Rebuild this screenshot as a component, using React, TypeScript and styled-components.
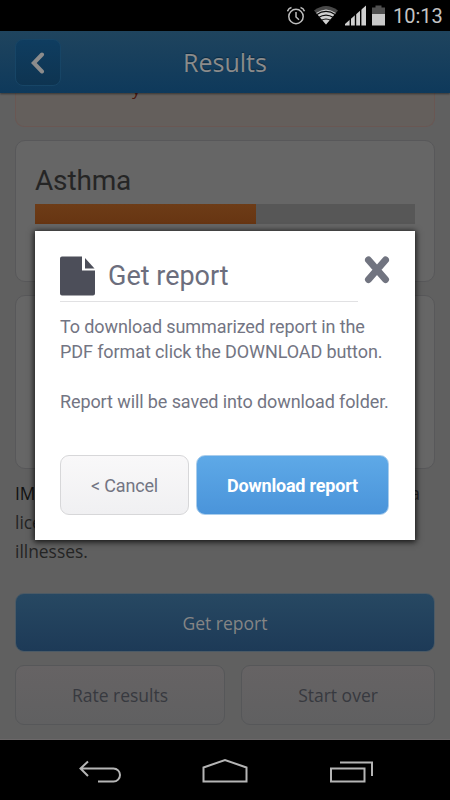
import React from "react";
import styled, { createGlobalStyle } from "styled-components";

const GlobalStyle = createGlobalStyle`
  *, *::before, *::after { box-sizing: border-box; }
  body { margin: 0; background: #000; }
  button { font: inherit; padding: 0; border: 0; background: none; }
`;

const Screen = styled.div`
  position: relative;
  width: 450px;
  height: 800px;
  display: flex;
  flex-direction: column;
  overflow: hidden;
  background: #000;
  font-family: "Open Sans", sans-serif;
`;

const StatusBar = styled.div`
  height: 31px;
  flex: none;
  display: flex;
  justify-content: flex-end;
  align-items: flex-start;
  padding-right: 7px;
`;

const StatusIcons = styled.svg`
  display: block;
  width: 106px;
  height: 31px;
`;

const Clock = styled.span`
  width: 50px;
  font: 400 20px/32px Roboto, sans-serif;
  color: #c4c4c4;
  white-space: nowrap;
`;

const Header = styled.header`
  height: 62px;
  flex: none;
  display: grid;
  grid-template-columns: 46px 1fr 46px;
  align-items: center;
  padding: 0 15px;
  background: linear-gradient(#1f445e, #0e395b);
  box-shadow: 0 1px 2px rgba(0, 0, 0, 0.45);
  z-index: 1;
`;

const BackButton = styled.button`
  width: 46px;
  height: 47px;
  display: grid;
  place-items: center;
  border-radius: 8px;
  border: 1px solid #174566;
  background: linear-gradient(#0f3d60, #0e3451);
`;

const HeaderTitle = styled.h1`
  margin: 0;
  text-align: center;
  font-size: 25px;
  line-height: 32px;
  font-weight: 400;
  color: #8b8b8b;
  text-shadow: 0 -1px 1px #0b2a41;
`;

const Content = styled.main`
  height: 647px;
  flex: none;
  display: flex;
  flex-direction: column;
  padding: 0 15px;
  background: #606060;
  border-bottom: 1px solid #6c6869;
`;

const Warning = styled.section`
  height: 34px;
  flex: none;
  overflow: hidden;
  display: flex;
  align-items: flex-end;
  padding: 0 0 25px 116px;
  border: 1px solid #6a5753;
  border-top: 0;
  border-radius: 0 0 9px 9px;
  background: #645f5c;
  color: #4a1710;
  font-size: 17px;
  line-height: 24px;
`;

const Card = styled.section<{ $height: number; $gap: number }>`
  height: ${(p) => p.$height}px;
  margin-top: ${(p) => p.$gap}px;
  flex: none;
  padding: 23px 19px;
  border: 1px solid #58585a;
  border-radius: 10px;
  background: #666;
`;

const CardTitle = styled.h2`
  margin: 0;
  font: 400 28px/33px Roboto, sans-serif;
  letter-spacing: -0.15px;
  color: #252525;
`;

const Meter = styled.div`
  height: 20px;
  margin-top: 7px;
  background: #575757;
`;

const MeterFill = styled.div`
  width: 58.2%;
  height: 100%;
  background: linear-gradient(#6d3c17, #673512);
`;

const Notice = styled.div`
  margin-top: 10px;
  height: 87px;
  flex: none;
  font-size: 17.4px;
  line-height: 29px;
  color: #242424;
`;

const NoticeLine = styled.div`
  display: flex;
  justify-content: space-between;
  padding-right: 15px;
`;

const Strong = styled.b`
  font-weight: 500;
  color: #111;
`;

const PrimaryAction = styled.button`
  height: 59px;
  margin-top: 27px;
  flex: none;
  border: 1px solid #4c5a65;
  border-radius: 9px;
  background: linear-gradient(#274862, #1d3a57);
  color: #858585;
  font-size: 17.5px;
`;

const ActionRow = styled.div`
  margin-top: 13px;
  display: grid;
  grid-template-columns: 210px 194px;
  gap: 16px;
`;

const SecondaryAction = styled.button`
  height: 60px;
  border: 1px solid #565759;
  border-radius: 9px;
  background: linear-gradient(#666364, #606061);
  color: #37393f;
  font-size: 17.5px;
`;

const NavBar = styled.nav`
  height: 60px;
  flex: none;
`;

const Dialog = styled.div`
  position: absolute;
  left: 35px;
  top: 231px;
  width: 380px;
  height: 309px;
  padding: 24px 26px 25px 25px;
  display: flex;
  flex-direction: column;
  background: #fff;
  box-shadow: 0 1px 6px 1px rgba(0, 0, 0, 0.8);
  font-family: Roboto, sans-serif;
  z-index: 2;
`;

const DialogHeader = styled.div`
  display: flex;
  justify-content: space-between;
  align-items: flex-start;
  height: 47px;
`;

const DialogHeading = styled.div`
  width: 298px;
  height: 47px;
  display: flex;
  align-items: flex-start;
  border-bottom: 1px solid #e1e1e3;
`;

const DialogTitle = styled.h2`
  margin: 3px 0 0 13px;
  font-size: 27px;
  line-height: 36px;
  font-weight: 400;
  color: #6c6e7d;
  white-space: nowrap;
`;

const CloseButton = styled.button`
  display: block;
  line-height: 0;
  margin-right: -1px;
`;

const Message = styled.p`
  margin: 12px 0 0;
  font-size: 18px;
  line-height: 25px;
  letter-spacing: -0.1px;
  color: #737583;
  white-space: pre;
`;

const DialogActions = styled.div`
  margin-top: auto;
  display: grid;
  grid-template-columns: 129px 193px;
  gap: 7px;
`;

const DialogButton = styled.button<{ $primary?: boolean }>`
  height: 60px;
  border-radius: 9px;
  border: 1px solid ${(p) => (p.$primary ? "#a9cdec" : "#d7d7d9")};
  background: ${(p) =>
    p.$primary
      ? "linear-gradient(#5ea9e7, #4a94da)"
      : "linear-gradient(#f9f8f9, #f0f0f2)"};
  color: ${(p) => (p.$primary ? "#fff" : "#737583")};
  font-size: 18px;
  letter-spacing: -0.2px;
  font-weight: ${(p) => (p.$primary ? 700 : 400)};
`;

const Label = styled.span<{ $width: number }>`
  display: inline-block;
  width: ${(p) => p.$width}px;
  white-space: nowrap;
`;

export default function App() {
  return (
    <Screen>
      <GlobalStyle />
      <StatusBar>
        <StatusIcons viewBox="287 0 106 31">
          <g fill="none" stroke="#bdbdbd" strokeWidth="1.5">
            <circle cx="296" cy="16.5" r="7.2" />
            <path d="M296 12v5l3 2.8M287.5 11.3q1-3 4-3.7M304.5 11.3q-1-3-4-3.7" />
          </g>
          <path d="M326 24.5 314 10.5q12-9 24 0z" fill="#484848" />
          <path d="M326 24.5 316.2 13q9.8-7 19.6 0z" fill="#d0d0d0" />
          <path d="M316.5 14.7q9.5-6.5 19 0M318.5 17.6q7.5-5 15 0M321 20.6q5-3.2 10 0" fill="none" stroke="#0a0a0a" strokeWidth="1.2" />
          <path d="M345 25.5V24L366 5.5v20z" fill="#cfcfcf" />
          <path d="M350.3 5v21M355.5 5v21M360.7 5v21" stroke="#000" strokeWidth="1.4" />
          <path d="M372 7.5h3.5V5.5h6v2h3.5V14h-13z" fill="#505050" />
          <path d="M372 14h13v11.5h-13z" fill="#c9c9c9" />
        </StatusIcons>
        <Clock>10:13</Clock>
      </StatusBar>
      <Header>
        <BackButton aria-label="Back">
          <svg width="16" height="24" viewBox="0 0 16 24">
            <path d="M12 4.5 3.8 13 12 21.5" fill="none" stroke="#8c8c8c" strokeWidth="4" strokeLinecap="round" />
          </svg>
        </BackButton>
        <HeaderTitle>Results</HeaderTitle>
      </Header>
      <Content>
        <Warning>y</Warning>
        <Card $height={142} $gap={13}>
          <CardTitle>Asthma</CardTitle>
          <Meter>
            <MeterFill />
          </Meter>
        </Card>
        <Card $height={174} $gap={13} />
        <Notice>
          <NoticeLine>
            <Strong>IM</Strong>
            <span>a</span>
          </NoticeLine>
          <NoticeLine>lice</NoticeLine>
          <NoticeLine>illnesses.</NoticeLine>
        </Notice>
        <PrimaryAction>Get report</PrimaryAction>
        <ActionRow>
          <SecondaryAction>Rate results</SecondaryAction>
          <SecondaryAction>Start over</SecondaryAction>
        </ActionRow>
      </Content>
      <NavBar>
        <svg width="450" height="60" viewBox="0 740 450 60" fill="none" stroke="#b5b5b5" strokeWidth="2">
          <path d="M88 761.5 80.5 768.5 88 776M81 768.5h32.5a6.3 6.3 0 0 1 0 13H98" />
          <path d="M203.5 781.5V767.5L225 760l21.5 7.5v14z" strokeLinejoin="miter" />
          <path d="M331 768.5h33.5v13H331zM340 762.5h32V776" />
        </svg>
      </NavBar>
      <Dialog role="dialog">
        <DialogHeader>
          <DialogHeading>
            <svg width="35" height="42" viewBox="0 0 35 42">
              <path d="M2 1.5h20v14h13v23a2 2 0 0 1-2 2H2a2 2 0 0 1-2-2v-35a2 2 0 0 1 2-2z" fill="#4c4e59" />
              <path d="M25 3v10.5h9.5z" fill="#4c4e59" />
            </svg>
            <DialogTitle>Get report</DialogTitle>
          </DialogHeading>
          <CloseButton aria-label="Close">
            <svg width="26" height="30" viewBox="0 0 26 30">
              <path d="m4.500 5 17 19.500M21.500 5l-17 19.500" stroke="#717480" strokeWidth="7" strokeLinecap="round" />
            </svg>
          </CloseButton>
        </DialogHeader>
        <Message>{"To download summarized report in the\nPDF format click the DOWNLOAD button.\n\nReport will be saved into download folder."}</Message>
        <DialogActions>
          <DialogButton>
            <Label $width={67}>&lt; Cancel</Label>
          </DialogButton>
          <DialogButton $primary>
            <Label $width={131}>Download report</Label>
          </DialogButton>
        </DialogActions>
      </Dialog>
    </Screen>
  );
}
